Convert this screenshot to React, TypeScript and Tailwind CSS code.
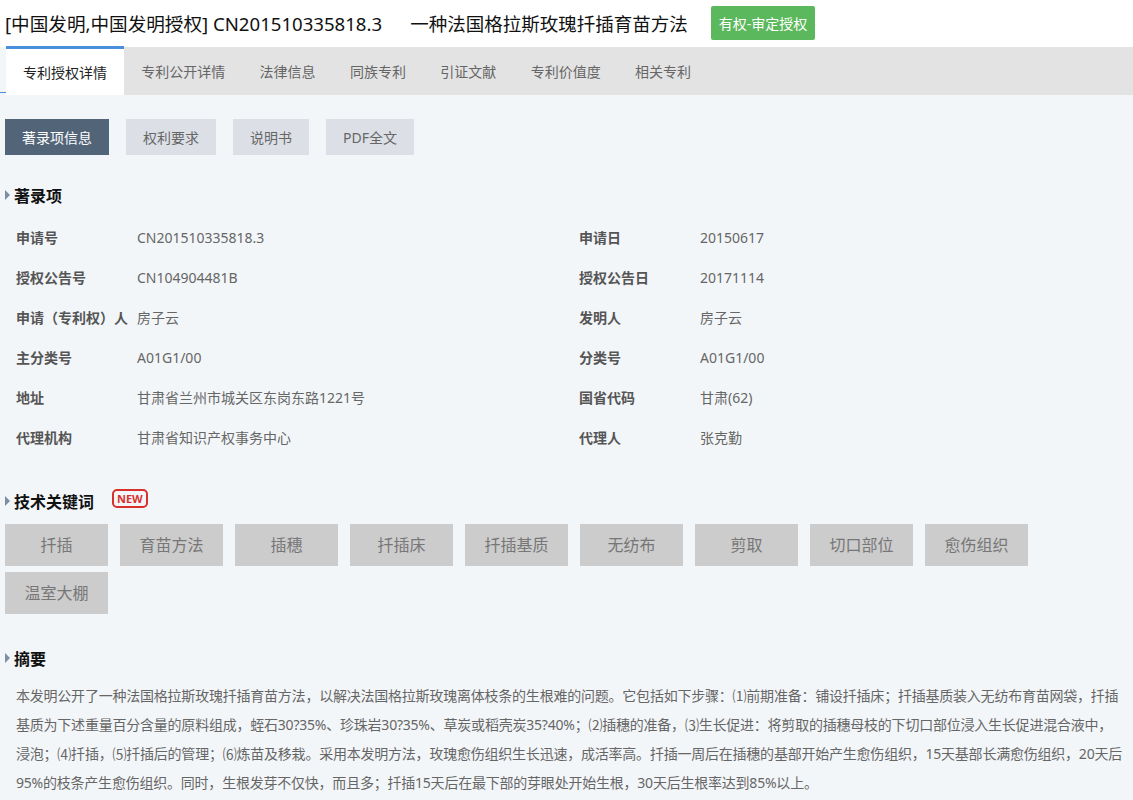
import React from 'react';

const FONT = '"Noto Sans", "Noto Sans CJK SC", sans-serif';

const tabs = ['专利授权详情', '专利公开详情', '法律信息', '同族专利', '引证文献', '专利价值度', '相关专利'];
const subTabs = ['著录项信息', '权利要求', '说明书', 'PDF全文'];

const fields: [string, string, string, string][] = [
  ['申请号', 'CN201510335818.3', '申请日', '20150617'],
  ['授权公告号', 'CN104904481B', '授权公告日', '20171114'],
  ['申请（专利权）人', '房子云', '发明人', '房子云'],
  ['主分类号', 'A01G1/00', '分类号', 'A01G1/00'],
  ['地址', '甘肃省兰州市城关区东岗东路1221号', '国省代码', '甘肃(62)'],
  ['代理机构', '甘肃省知识产权事务中心', '代理人', '张克勤'],
];

const keywords = ['扦插', '育苗方法', '插穗', '扦插床', '扦插基质', '无纺布', '剪取', '切口部位', '愈伤组织', '温室大棚'];

// abstract is split by hand so the line breaks match the screenshot
const abstractLines = [
  '本发明公开了一种法国格拉斯玫瑰扦插育苗方法，以解决法国格拉斯玫瑰离体枝条的生根难的问题。它包括如下步骤：⑴前期准备：铺设扦插床；扦插基质装入无纺布育苗网袋，扦插',
  '基质为下述重量百分含量的原料组成，蛭石30?35%、珍珠岩30?35%、草炭或稻壳炭35?40%；⑵插穗的准备，⑶生长促进：将剪取的插穗母枝的下切口部位浸入生长促进混合液中，',
  '浸泡；⑷扦插，⑸扦插后的管理；⑹炼苗及移栽。采用本发明方法，玫瑰愈伤组织生长迅速，成活率高。扦插一周后在插穗的基部开始产生愈伤组织，15天基部长满愈伤组织，20天后',
  '95%的枝条产生愈伤组织。同时，生根发芽不仅快，而且多；扦插15天后在最下部的芽眼处开始生根，30天后生根率达到85%以上。',
];

const SectionTitle: React.FC<{ title: string; children?: React.ReactNode; className?: string }> = ({ title, children, className }) => (
  <div className={`flex items-center h-[22px] pl-[5px] ${className ?? ''}`}>
    <span className="w-0 h-0 border-y-[5px] border-y-transparent border-l-[5px] border-l-[#7d8ea3] mr-[4px] -mt-[2px]" />
    <span className="text-[16px] leading-[22px] font-bold text-[#111]">{title}</span>
    {children}
  </div>
);

const App: React.FC = () => {
  return (
    <div className="w-full min-h-screen bg-[#f3f6f9] overflow-hidden pb-6" style={{ fontFamily: FONT }}>
      {/* title bar */}
      <div className="h-[47px] bg-white flex items-center px-[5px] whitespace-nowrap">
        <span className="text-[18.6px] text-[#111]">[中国发明,中国发明授权] CN201510335818.3</span>
        <span className="text-[18.5px] text-[#111] ml-[28px]">一种法国格拉斯玫瑰扦插育苗方法</span>
        <span className="ml-[23px] h-[34px] px-[8px] flex items-center bg-[#5cb85c] text-white text-[14px] rounded-[2px] mt-[-1px]">
          有权-审定授权
        </span>
      </div>

      {/* main tabs */}
      <div className="flex h-[48px] bg-[#e3e3e3]">
        <div className="w-[6px] bg-[#f3f6f9] flex flex-col justify-end pb-[2px]">
          <div className="h-[1px] bg-[#4a8fdc]" />
        </div>
        {tabs.map((t, i) =>
          i === 0 ? (
            <div key={t} className="bg-white border-t-[3px] border-[#4a8fdc] px-[17px] flex items-center text-[14px] text-[#222] mt-[-1px]">
              {t}
            </div>
          ) : (
            <div key={t} className="px-[17.2px] flex items-center text-[14px] text-[#666]">
              {t}
            </div>
          )
        )}
      </div>

      {/* sub tabs */}
      <div className="flex gap-[17px] px-[5px] pt-[24px]">
        {subTabs.map((t, i) => (
          <div
            key={t}
            className={`h-[36px] px-[17px] flex items-center text-[14px] ${i === 0 ? 'bg-[#526478] text-white' : 'bg-[#dce0e6] text-[#666]'}`}
          >
            {t}
          </div>
        ))}
      </div>

      <SectionTitle title="著录项" className="mt-[30px]" />

      <div className="mt-[10px]">
        {fields.map(([l1, v1, l2, v2]) => (
          <div key={l1} className="flex h-[40px] items-center text-[14px] whitespace-nowrap">
            <div className="w-[563px] flex pl-[16px]">
              <span className="w-[121px] font-bold text-[#555]">{l1}</span>
              <span className="text-[#666]">{v1}</span>
            </div>
            <div className="flex pl-[16px]">
              <span className="w-[121px] font-bold text-[#555]">{l2}</span>
              <span className="text-[#666]">{v2}</span>
            </div>
          </div>
        ))}
      </div>

      <SectionTitle title="技术关键词" className="mt-[34px]">
        <span className="ml-[18px] -mt-[7px] h-[19px] px-[3px] border-2 border-[#d9302c] rounded-[5px] text-[#d9302c] text-[11px] font-bold leading-[14px] flex items-center">
          NEW
        </span>
      </SectionTitle>

      <div className="flex flex-wrap gap-x-[12px] gap-y-[6px] pl-[5px] mt-[11px]">
        {keywords.map(k => (
          <div key={k} className="w-[103px] h-[42px] bg-[#cccccc] text-[#777] text-[16px] flex items-center justify-center">
            {k}
          </div>
        ))}
      </div>

      <SectionTitle title="摘要" className="mt-[34px]" />

      <div className="mt-[11px] pl-[16px] text-[14px] text-[#666] leading-[29px] tracking-[-0.22px]">
        {abstractLines.map((line, i) => (
          <div key={i} className="whitespace-nowrap">
            {line}
          </div>
        ))}
      </div>
    </div>
  );
};

export default App;
